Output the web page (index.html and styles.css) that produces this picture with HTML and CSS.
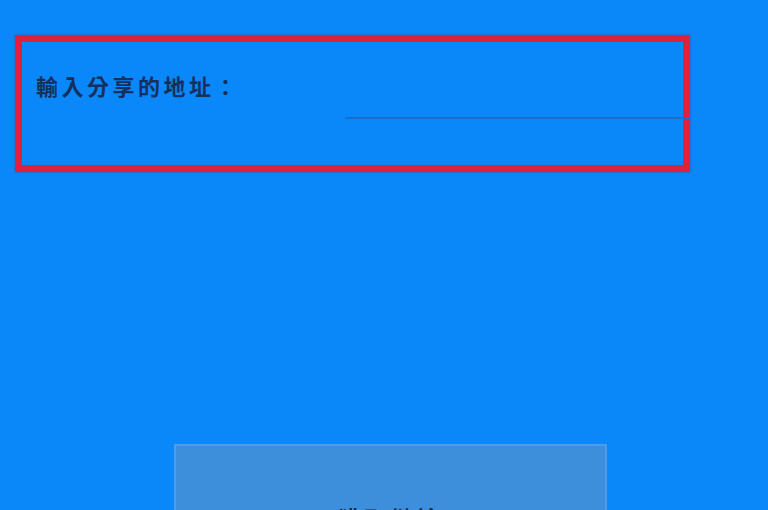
FILE: index.html
```html
<!DOCTYPE html>
<html lang="zh-Hant">
<head>
<meta charset="utf-8">
<title>分享</title>
<link rel="stylesheet" href="styles.css">
</head>
<body>
<div class="page">
  <div class="panel">
    <div class="label">輸入分享的地址：</div>
    <div class="field"></div>
  </div>
  <div class="button">獲取鏈接</div>
</div>
</body>
</html>
```
FILE: styles.css
```css
html, body {
  margin: 0;
  padding: 0;
  width: 768px;
  height: 510px;
  overflow: hidden;
  background: #0a87f8;
}
.page {
  display: flex;
  flex-direction: column;
  padding-top: 35px;
  font-family: "Noto Sans CJK TC", "Noto Sans CJK SC", sans-serif;
}
.panel {
  margin-left: 15px;
  width: 647px;
  height: 93px;
  border: 7px solid #e0203c;
  box-shadow: 0 0 2px rgba(120, 40, 90, 0.6);
  padding: 30px 0 0 14px;
  display: flex;
  flex-direction: column;
}
.label {
  font-size: 22px;
  line-height: 26px;
  letter-spacing: 3.5px;
  color: #16305e;
  font-weight: 700;
}
.field {
  margin-left: 309px;
  height: 19px;
  border-bottom: 2px solid #1a6ec8;
  margin-right: -7px;
}
.button {
  margin-top: 272px;
  margin-left: 174px;
  width: 433px;
  height: 90px;
  background: #3e8fdb;
  border: 2px solid #4f9de6;
  padding-top: 56px;
  box-sizing: border-box;
  text-align: center;
  font-size: 22px;
  line-height: 30px;
  letter-spacing: 4px;
  color: #0e2a55;
  font-weight: 700;
}
```
